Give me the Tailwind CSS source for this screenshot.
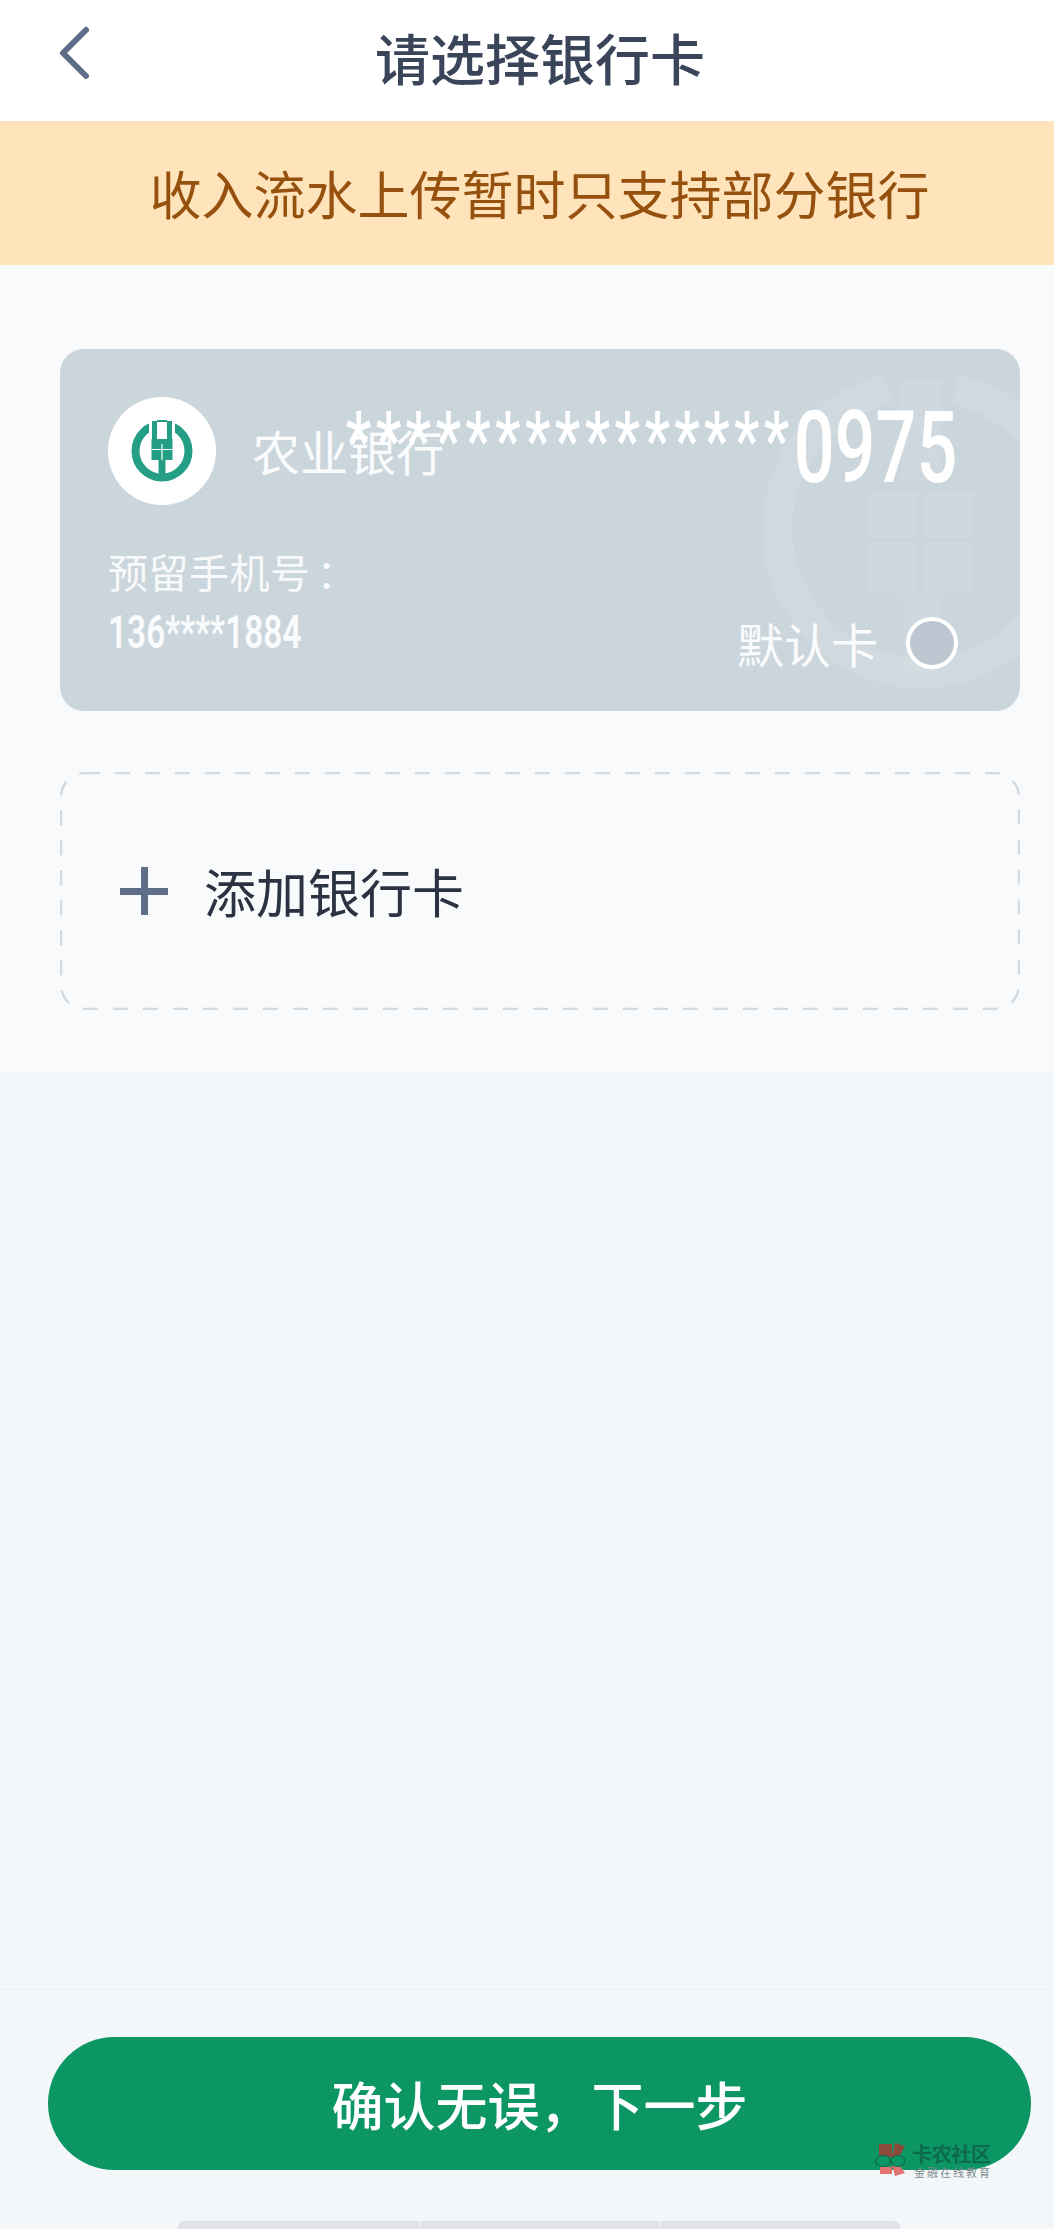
<!DOCTYPE html>
<html lang="zh-CN">
<head>
<meta charset="utf-8">
<script src="https://cdn.jsdelivr.net/npm/@tailwindcss/browser@4"></script>
</head>
<body class="font-['Noto_Sans_CJK_SC','Noto_Sans',sans-serif]">
<div class="w-[1054px] h-[2229px] flex flex-col bg-[#f4f7fa] overflow-hidden">
  <header class="h-[121px] bg-white grid grid-cols-[1fr_auto_1fr] items-center">
    <div class="pl-[58px] pb-[16px]">
      <svg class="block" width="34" height="56" viewBox="0 0 34 56" fill="none"><path d="M28 5 L5 28 L28 51" stroke="#5e6e88" stroke-width="6" stroke-linecap="round" stroke-linejoin="round"/></svg>
    </div>
    <h1 class="text-[55px] leading-[60px] font-medium text-[#3b4559] pb-[10px] pl-[26px]">请选择银行卡</h1>
    <div></div>
  </header>
  <div class="h-[144px] bg-[#fee3bb] flex items-center justify-center pl-[29px] pr-[4px]">
    <p class="text-[52px] leading-[60px] text-[#96510f]">收入流水上传暂时只支持部分银行</p>
  </div>
  <main class="h-[807px] bg-[#f8fafc] pl-[60px] pr-[34px] pt-[84px] flex flex-col gap-[61px]">
    <section class="relative h-[362px] rounded-[24px] bg-[#cbd5dc] overflow-hidden text-white pl-[48px] pt-[48px]">
      <svg class="absolute left-[702px] top-[21px]" width="318" height="318" viewBox="0 0 318 318" fill="none">
        <path d="M126 19 A144 144 0 1 0 193 19" stroke="white" stroke-opacity=".1" stroke-width="30"/>
        <path d="M140 10 H180 V110 H140 Z" fill="white" fill-opacity=".08"/>
        <rect x="106" y="122" width="50" height="46" rx="4" fill="white" fill-opacity=".08"/>
        <rect x="164" y="122" width="48" height="46" rx="4" fill="white" fill-opacity=".08"/>
        <rect x="106" y="173" width="50" height="50" rx="4" fill="white" fill-opacity=".08"/>
        <rect x="164" y="173" width="48" height="50" rx="4" fill="white" fill-opacity=".08"/>
        <rect x="141" y="223" width="35" height="80" fill="white" fill-opacity=".08"/>
      </svg>
      <div class="relative flex items-center gap-[36px]">
        <div class="w-[108px] h-[108px] rounded-full bg-white flex items-center justify-center">
          <svg width="64" height="64" viewBox="-32 -32 64 64" fill="none">
            <circle cx="0" cy="0" r="26.5" stroke="#249e85" stroke-width="8"/>
            <rect x="-13" y="-32" width="26" height="24" fill="white"/>
            <path d="M-10 -11 V-30 H-5 V-11 H5 V-30 H10 V-11 Z" fill="#249e85"/>
            <rect x="-5" y="-31" width="10" height="2" fill="#249e85"/>
            <rect x="-10.5" y="-12" width="21" height="21" fill="#249e85"/>
            <rect x="-3.5" y="9" width="7" height="21" fill="#249e85"/>
            <path d="M-10.5 -1.5 H10.5 M0 -7 V9" stroke="white" stroke-width="1.2"/>
          </svg>
        </div>
        <span class="text-[48px] leading-[60px] font-normal text-white/90 pb-[2px]">农业银行</span>
      </div>
      <p class="relative mt-[38px] text-[40px] leading-[56px] font-normal text-white/85 tracking-[0.5px]">预留手机号<span class="ml-[6px]">：</span></p>
      <p class="relative mt-[6px] w-fit origin-left scale-x-[0.71] font-['Roboto',sans-serif] text-[47px] leading-[54px] font-semibold text-white/90">136****1884</p>
      <p class="absolute right-[63px] top-[40px] origin-right scale-x-[0.72] whitespace-nowrap font-['Roboto',sans-serif] text-[100px] leading-[118px] font-medium"><span class="relative -top-[14px] text-[80px] tracking-[6px]">***************</span>0975</p>
      <div class="absolute right-[62px] bottom-[41px] flex items-center gap-[28px]">
        <span class="text-[47px] leading-[54px] font-normal text-white/90">默认卡</span>
        <span class="w-[52px] h-[52px] rounded-full border-[4px] border-white bg-[#bcc6d0]"></span>
      </div>
    </section>
    <button class="relative h-[238px] w-[960px] flex items-center pl-[60px] gap-[36px] text-left">
      <svg class="absolute inset-0" width="960" height="238" viewBox="0 0 960 238" fill="none"><rect x="1" y="1" width="958" height="236" rx="24" stroke="#d3dae0" stroke-width="2.5" stroke-dasharray="15 15"/></svg>
      <span class="relative w-[48px] h-[48px] flex items-center justify-center">
        <span class="absolute w-[48px] h-[7px] bg-[#5e6e88]"></span>
        <span class="absolute w-[7px] h-[48px] bg-[#5e6e88]"></span>
      </span>
      <span class="text-[52px] leading-[60px] text-[#2b3342]">添加银行卡</span>
    </button>
  </main>
  <div class="flex-1"></div>
  <footer class="relative h-[240px] border-t-[1px] border-[#ebeff3] pt-[47px] pl-[48px] pr-[23px] flex flex-col">
    <button class="h-[133px] rounded-full bg-[#0c9664] text-white text-[52px] leading-[70px] font-medium flex items-center justify-center">确认无误，下一步</button>
    <div class="absolute left-[875px] top-[153px] flex items-start gap-[7px]">
      <svg width="30" height="33" viewBox="0 0 30 33" fill="none">
        <path d="M4 1 H17 V13 L20 0 L30 3 L24 14 H4 Z" fill="#8b4a3a"/>
        <path d="M5 24 H17 V31 H5 Z M17 22 H24 L30 30 L20 33 Z" fill="#e07270"/>
        <ellipse cx="8" cy="18" rx="7.5" ry="5.5" stroke="#0d6a4d" stroke-width="1.2" fill="#0c9664"/>
        <ellipse cx="23" cy="18" rx="7" ry="5.5" stroke="#0d6a4d" stroke-width="1.2" fill="#0c9664"/>
      </svg>
      <div class="flex flex-col items-start">
        <span class="text-[20px] leading-[22px] font-bold tracking-[-0.3px] text-[#0d6a4d]">卡农社区</span>
        <span class="text-[11px] leading-[14px] tracking-[2px] text-[#7e8a8a] pl-[2px]">金融在线教育</span>
      </div>
    </div>
    <div class="mt-auto ml-[130px] w-[722px] h-[8px] grid grid-cols-[242px_238px_1fr] gap-[1px]">
      <span class="rounded-tl-[6px] bg-[#e0e4e8]"></span>
      <span class="bg-[#e0e4e8]"></span>
      <span class="rounded-tr-[6px] bg-[#e0e4e8]"></span>
    </div>
  </footer>
</div>
</body>
</html>
